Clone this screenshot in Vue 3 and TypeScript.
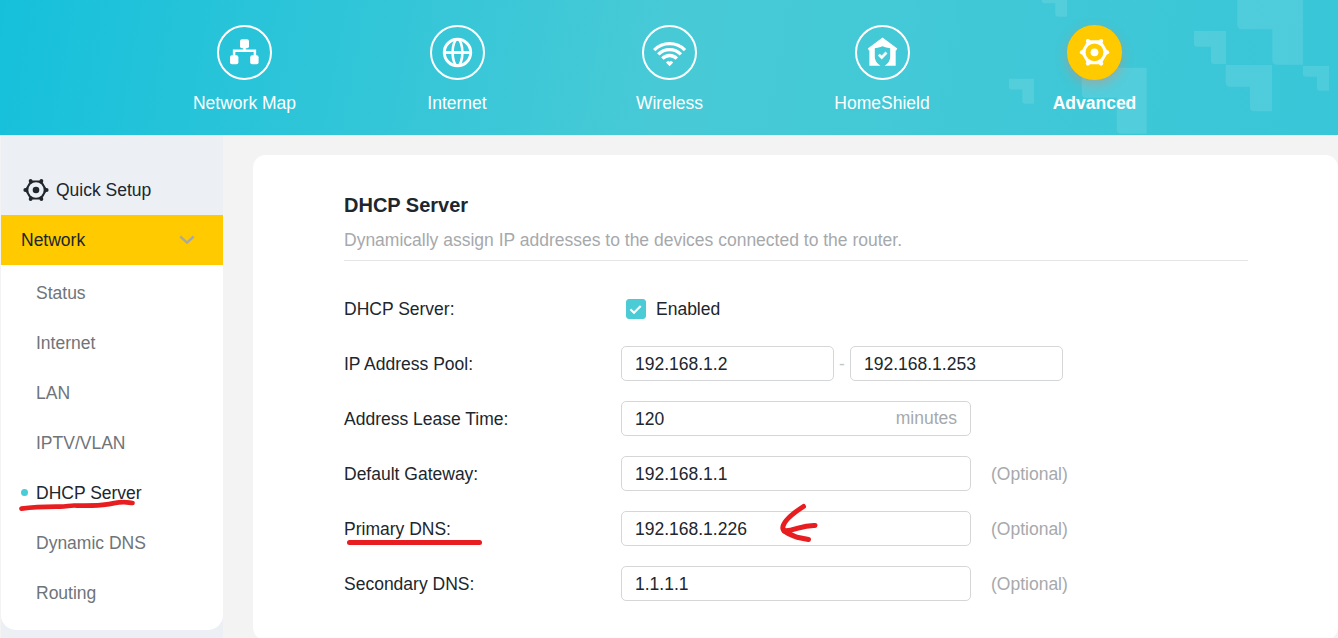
<script setup lang="ts">
import { ref } from 'vue'

interface NavItem {
  id: string
  label: string
}
interface Field {
  label: string
  value: string
  unit?: string
  optional?: boolean
}

const nav: NavItem[] = [
  { id: 'map', label: 'Network Map' },
  { id: 'internet', label: 'Internet' },
  { id: 'wireless', label: 'Wireless' },
  { id: 'shield', label: 'HomeShield' },
  { id: 'advanced', label: 'Advanced' },
]
const activeNav = ref('advanced')

const subItems: string[] = ['Status', 'Internet', 'LAN', 'IPTV/VLAN', 'DHCP Server', 'Dynamic DNS', 'Routing']
const activeSub = ref('DHCP Server')

const enabled = ref(true)
const poolStart = ref('192.168.1.2')
const poolEnd = ref('192.168.1.253')
const fields = ref<Field[]>([
  { label: 'Address Lease Time:', value: '120', unit: 'minutes' },
  { label: 'Default Gateway:', value: '192.168.1.1', optional: true },
  { label: 'Primary DNS:', value: '192.168.1.226', optional: true },
  { label: 'Secondary DNS:', value: '1.1.1.1', optional: true },
])
</script>

<template>
  <div class="page">
    <header class="header">
      <svg class="pattern" width="338" height="135" viewBox="1000 0 338 135" fill="#fff" fill-opacity="0.11">
        <path d="M1041.700 0H1067V16.700H1058Q1055.300 16.700 1055.300 14V3.300H1044Q1041.700 3 1041.700 0Z" />
        <path d="M1009 78.700H1034V103.700H1025Q1022.300 103.700 1022.300 101V89.500H1011.500Q1009 89.500 1009 87Z" />
        <path d="M1081.700 67.700H1146.700V133.700H1121Q1116.700 133.700 1116.700 129V97.700H1086Q1081.700 97.700 1081.700 93Z" />
        <path d="M1194 31H1226V64H1214Q1211 64 1211 61V46.700H1197Q1194 46.700 1194 43.500Z" />
        <path d="M1237.300 0H1303V64.700H1277Q1272.300 64.700 1272.300 60V29.300H1242Q1237.300 29.300 1237.300 24Z" />
        <path d="M1225.700 65H1272V111.300H1254Q1250 111.300 1250 107V86.700H1230Q1225.700 86.700 1225.700 82Z" />
        <path d="M1303 66H1329V90.700H1320Q1317 90.700 1317 88V76.700H1306Q1303 76.700 1303 74Z" />
      </svg>
      <nav class="nav">
        <a v-for="item in nav" :key="item.id" class="nav-item" :class="{ active: item.id === activeNav }" @click="activeNav = item.id">
          <span class="circle">
            <svg v-if="item.id === 'map'" width="55" height="55" viewBox="0 0 55 55" fill="#fff">
              <rect x="23" y="14.300" width="9" height="9" rx="2" />
              <rect x="13" y="30.200" width="8.400" height="9" rx="2" />
              <rect x="33.200" y="30.200" width="8.400" height="9" rx="2" />
              <path d="M27.500 22v4M17.100 31v-5.300h20.800V31" fill="none" stroke="#fff" stroke-width="2.500" />
            </svg>
            <svg v-else-if="item.id === 'internet'" width="55" height="55" viewBox="0 0 55 55" fill="none" stroke="#fff">
              <circle cx="27.500" cy="27.500" r="13.200" stroke-width="3" />
              <ellipse cx="27.500" cy="27.500" rx="4.900" ry="13.300" stroke-width="2.600" />
              <path d="M14 27.500h27" stroke-width="2.900" />
            </svg>
            <svg v-else-if="item.id === 'wireless'" width="55" height="55" viewBox="0 0 55 55" fill="none" stroke="#fff" stroke-width="3.300">
              <path d="M12.200 25.200A21.500 21.500 0 0 1 43 25.200" />
              <path d="M16.300 29.400A15.600 15.600 0 0 1 38.900 29.400" />
              <path d="M20.400 33.600A9.900 9.900 0 0 1 34.800 33.600" />
              <path d="M24 37.600Q26 35 27.600 36.800Q29.200 35 31.200 37.600L27.600 41.200Z" fill="#fff" stroke="none" />
            </svg>
            <svg v-else-if="item.id === 'shield'" width="55" height="55" viewBox="0 0 55 55" fill="#fff">
              <path fill-rule="evenodd" d="M27.500 12.600 42.300 23.600 41.200 25.500H40.700V40.700H29.700Q35.200 37 35.200 32V23.300Q31 22.900 27.500 21.200Q24 22.900 19.800 23.300V32Q19.800 37 25.500 40.700H14.400V25.500H13.900L12.800 23.600Z" />
              <path d="M23.800 29.600 26.700 32.500 31.500 27.500" fill="none" stroke="#fff" stroke-width="2.700" />
            </svg>
            <svg v-else width="55" height="55" viewBox="0 0 55 55" fill="none" stroke="#fff">
              <path d="M21.400 16.300H33.600L40 27.300 33.600 38.300H21.400L15 27.300Z" fill="#fff" stroke-width="2" stroke-linejoin="round" />
              <g fill="#fff" stroke="none">
                <circle cx="20.900" cy="16" r="2.100" /><circle cx="34.100" cy="16" r="2.100" />
                <circle cx="14.900" cy="27.300" r="2.100" /><circle cx="40.100" cy="27.300" r="2.100" />
                <circle cx="20.900" cy="38.600" r="2.100" /><circle cx="34.100" cy="38.600" r="2.100" />
              </g>
              <circle cx="27.500" cy="27.300" r="8.900" fill="#ffca00" stroke="none" />
              <circle cx="27.500" cy="27.300" r="3.900" fill="#fff" stroke="none" />
            </svg>
          </span>
          <span class="nav-label">{{ item.label }}</span>
        </a>
      </nav>
    </header>

    <div class="body">
      <aside class="sidebar">
        <a class="quick">
          <svg width="26" height="24" viewBox="0 0 26 24">
            <path d="M7.700 3H18.300L23.500 12 18.300 21H7.700L2.500 12Z" fill="#20262d" stroke="#20262d" stroke-width="1.200" />
            <g fill="#20262d">
              <circle cx="7.600" cy="2.900" r="1.900" /><circle cx="18.400" cy="2.900" r="1.900" />
              <circle cx="2.300" cy="12" r="1.900" /><circle cx="23.700" cy="12" r="1.900" />
              <circle cx="7.600" cy="21.100" r="1.900" /><circle cx="18.400" cy="21.100" r="1.900" />
            </g>
            <circle cx="13" cy="12" r="7.700" fill="#ecf0f5" />
            <circle cx="13" cy="12" r="3.300" fill="#20262d" />
          </svg>
          <span>Quick Setup</span>
        </a>
        <a class="group">
          <span>Network</span>
          <svg width="16" height="10" viewBox="0 0 16 10" fill="none" stroke="#a9a9a4" stroke-width="2.400">
            <path d="M1.300 1.500 8 7.600 14.700 1.500" />
          </svg>
        </a>
        <ul class="submenu">
          <li v-for="s in subItems" :key="s" :class="{ current: s === activeSub }" @click="activeSub = s">{{ s }}</li>
        </ul>
      </aside>

      <main class="panel">
        <h1>DHCP Server</h1>
        <p class="desc">Dynamically assign IP addresses to the devices connected to the router.</p>
        <div class="row">
          <span class="label">DHCP Server:</span>
          <span class="check" @click="enabled = !enabled">
            <span class="box" :class="{ on: enabled }">
              <svg v-if="enabled" width="20" height="20" viewBox="0 0 20 20" fill="none" stroke="#fff" stroke-width="2.200">
                <path d="M4.400 10.300 8 13.700 14.700 7" />
              </svg>
            </span>
            Enabled
          </span>
        </div>
        <div class="row">
          <span class="label">IP Address Pool:</span>
          <span class="input short"><input v-model="poolStart" /></span>
          <span class="dash">-</span>
          <span class="input short"><input v-model="poolEnd" /></span>
        </div>
        <div v-for="f in fields" :key="f.label" class="row">
          <span class="label">{{ f.label }}</span>
          <span class="input"><input v-model="f.value" /><span v-if="f.unit" class="unit">{{ f.unit }}</span></span>
          <span v-if="f.optional" class="optional">(Optional)</span>
        </div>
      </main>
    </div>

    <svg class="marks" width="1338" height="638" viewBox="0 0 1338 638" fill="none" stroke="#e71d1f" stroke-width="5" stroke-linecap="round" stroke-linejoin="round">
      <path d="M21.500 508.700C32 507.200 47 506.600 60 506.700C67 506.500 70 505.300 75 505.500C86 505.700 97 506 107 504.400C114 503.300 119 502.200 124 502.200C128 502.200 130 503 132.500 503" stroke-width="4.700" />
      <path d="M349.500 542.400H479.500" />
      <path d="M803.500 506.500C795 512 783 521 782.800 528C783 531.500 789 534 797 537.200L808.500 539.500" />
      <path d="M784 531C797 530.500 801 525 815 525.500" />
    </svg>
  </div>
</template>

<style>
html,
body {
  margin: 0;
  overflow: hidden;
}
</style>

<style scoped>
.page {
  position: relative;
  width: 1338px;
  height: 638px;
  overflow: hidden;
  background: #f3f3f3;
  color: #20262d;
  font-family: 'Liberation Sans', Arial, sans-serif;
  font-size: 17.5px;
  line-height: 20px;
}
.header {
  position: relative;
  height: 135px;
  background: linear-gradient(100deg, #16c0db 0%, #48cad6 50%, #38c6d8 100%);
}
.pattern {
  position: absolute;
  top: 0;
  right: 0;
}
.nav {
  position: relative;
  display: flex;
  padding: 25px 0 0 138.25px;
}
.nav-item {
  display: flex;
  flex-direction: column;
  align-items: center;
  width: 212.5px;
  color: #fff;
}
.circle {
  box-sizing: border-box;
  width: 55px;
  height: 55px;
  border: 2px solid #fff;
  border-radius: 50%;
}
.circle svg {
  display: block;
  margin: -2px;
}
.active .circle {
  border-color: #ffca00;
  background: #ffca00;
  box-shadow: 0 4px 12px rgba(255, 120, 80, 0.4);
}
.nav-label {
  margin-top: 13px;
}
.active .nav-label {
  font-weight: bold;
}
.body {
  display: flex;
  align-items: flex-start;
  height: 503px;
  padding-left: 1px;
}
.sidebar {
  flex: none;
  width: 222px;
  height: 503px;
  margin-right: 30px;
  background: #ecf0f5;
}
.quick {
  display: flex;
  align-items: center;
  gap: 7px;
  height: 50px;
  padding: 30px 0 0 22px;
}
.group {
  display: flex;
  align-items: center;
  justify-content: space-between;
  height: 50px;
  padding: 0 28px 0 20px;
  background: #ffca00;
}
.submenu {
  height: 362px;
  margin: 0;
  padding: 3px 0 0;
  border-radius: 0 0 15px 15px;
  background: #fff;
  list-style: none;
}
.submenu li {
  position: relative;
  padding-left: 35px;
  color: #6f7479;
  line-height: 50px;
}
.submenu .current {
  color: #20262d;
}
.current::before {
  position: absolute;
  top: 21px;
  left: 20px;
  width: 7px;
  height: 7px;
  border-radius: 50%;
  background: #4acbd6;
  content: '';
}
.panel {
  box-sizing: border-box;
  flex: 1;
  height: 485px;
  margin-top: 20px;
  padding: 38px 90px 0 91px;
  border-radius: 12.5px;
  background: #fff;
}
h1 {
  margin: 0;
  font-size: 20px;
  line-height: 24px;
}
.desc {
  margin: 13px 0 30px;
  padding-bottom: 10px;
  border-bottom: 1px solid #e4e5e6;
  color: #a6a9ac;
}
.row {
  display: flex;
  align-items: center;
  height: 35px;
  margin-bottom: 20px;
}
.label {
  width: 277px;
}
.check {
  display: flex;
  align-items: center;
  gap: 10px;
  padding-left: 5px;
}
.box {
  box-sizing: border-box;
  width: 20px;
  height: 20px;
  border: 1px solid #d4d6d8;
  border-radius: 3px;
}
.box.on {
  border-color: #4acbd6;
  background: #4acbd6;
}
.box svg {
  display: block;
  margin: -1px;
}
.input {
  box-sizing: border-box;
  display: flex;
  align-items: center;
  width: 350px;
  height: 35px;
  padding: 0 13px;
  border: 1px solid #d4d6d8;
  border-radius: 5px;
}
.input.short {
  width: 213px;
}
input {
  flex: 1;
  min-width: 0;
  padding: 0;
  border: 0;
  outline: 0;
  background: none;
  color: inherit;
  font: inherit;
}
.unit {
  margin-top: -2px;
  color: #a6a9ac;
}
.dash {
  width: 16px;
  color: #c4c6c8;
  text-align: center;
}
.optional {
  margin-left: 20px;
  color: #a6a9ac;
}
.marks {
  position: absolute;
  top: 0;
  left: 0;
  pointer-events: none;
}
</style>
